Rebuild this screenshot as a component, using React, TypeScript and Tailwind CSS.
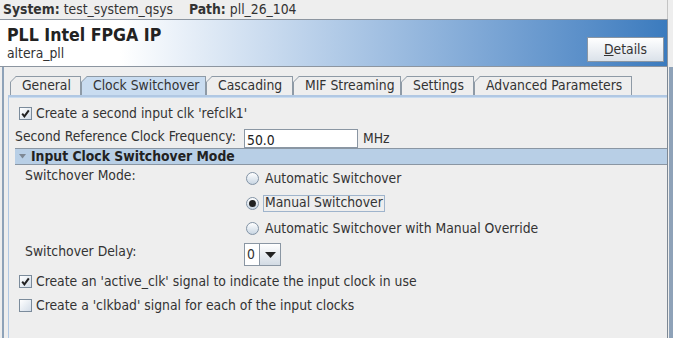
import React from "react";

const tabs = [
  { label: "General", w: "w-[71px]" },
  { label: "Clock Switchover", w: "w-[125px]", active: true },
  { label: "Cascading", w: "w-[87px]" },
  { label: "MIF Streaming", w: "w-[108px]" },
  { label: "Settings", w: "w-[73px]" },
  { label: "Advanced Parameters", w: "w-[158px]" },
];

function Check({ checked }: { checked?: boolean }) {
  return (
    <span className="w-[13px] h-[13px] shrink-0 border border-[#7b8b9b] bg-gradient-to-br from-white to-[#d3dde8] flex items-center justify-center">
      {checked && (
        <svg width="9" height="9" viewBox="0 0 9 9">
          <path d="M1.2 4.6 L3.4 7.4 L7.8 1.4" fill="none" stroke="#222" strokeWidth="2" />
        </svg>
      )}
    </span>
  );
}

function Radio({ selected }: { selected?: boolean }) {
  return (
    <span className="w-[13px] h-[13px] shrink-0 rounded-full border border-[#8293a5] bg-gradient-to-b from-white to-[#c9d6e3] flex items-center justify-center">
      {selected && <span className="w-[7px] h-[7px] rounded-full bg-[#222]" />}
    </span>
  );
}

function Tab({ label, w, active }: { label: string; w: string; active?: boolean }) {
  const bg = active ? "bg-[#c9dcf0]" : "bg-[#eeeeee]";
  return (
    <div className={`relative h-[19px] ${w} ${bg} border-t border-r border-[#8e9aa6] flex items-center pl-[12px] text-[#333]`}>
      <svg className="absolute left-0 top-[-1px]" width="7" height="19" viewBox="0 0 7 19">
        <path d="M0 0 H6 L0 6 Z" fill="#eeeeee" />
        <path d="M0.5 19 V6 L6 0.5 H7" fill="none" stroke="#8e9aa6" strokeWidth="1" />
      </svg>
      <span className="relative">{label}</span>
    </div>
  );
}

export default function App() {
  return (
    <div className="w-[673px] h-[338px] overflow-hidden bg-[#eeeeee] flex flex-col text-[13.8px] leading-none text-[#333] font-['DejaVu_Sans_Condensed',sans-serif]">
      {/* top bar */}
      <div className="h-[19px] shrink-0 flex items-center pl-[3px] border-r border-[#c4c4c4] mr-[5px]">
        <span className="font-bold">System:</span>
        <span className="ml-[4px]">test_system_qsys</span>
        <span className="font-bold ml-[16px]">Path:</span>
        <span className="ml-[4px]">pll_26_104</span>
      </div>

      {/* header */}
      <div className="h-[48px] shrink-0 border-y border-[#8c95a0] mr-[5px] border-r border-r-[#8c95a0] bg-gradient-to-r from-white from-[18%] to-[#3b7bbe] flex items-start justify-between">
        <div className="pl-[7px] pt-[7px]">
          <div className="text-[17.6px] font-bold text-[#222]">PLL Intel FPGA IP</div>
          <div className="mt-[2px] text-[13.8px] text-[#333]">altera_pll</div>
        </div>
        <button className="mt-[17px] mr-[3px] w-[77px] h-[25px] border border-[#8a96a3] bg-gradient-to-b from-white to-[#dbe2ea] text-[#333] flex items-center justify-center">
          <span className="underline">D</span>etails
        </button>
      </div>

      {/* body */}
      <div className="flex flex-1 min-h-0 pl-[2px]">
        <div className="flex-1 border-l-2 border-[#8ea2b8] flex flex-col">
          <div className="flex-1 border-r border-[#7d8894] pl-[4px] pt-[9px] flex flex-col">
            <div className="flex pl-[2px]">
              {tabs.map((t) => (
                <Tab key={t.label} {...t} />
              ))}
            </div>
            <div className="flex-1 border-l border-t-2 border-[#b1c8e3] flex flex-col">
              <div className="h-[1px] bg-[#c9dcf0]" />
              <label className="flex items-center gap-[4px] pl-[10px] mt-[9px] h-[13px]">
                <Check checked />
                <span>Create a second input clk 'refclk1'</span>
              </label>
              <div className="flex items-center pl-[6px] mt-[9px] h-[19px]">
                <span className="w-[229px] -mt-[3px]">Second Reference Clock Frequency:</span>
                <input
                  defaultValue="50.0"
                  className="w-[114px] h-[19px] border border-[#8a96a3] bg-white px-[2px] pt-[3px] text-[13.8px] text-[#222] outline-none"
                />
                <span className="ml-[5px]">MHz</span>
              </div>
              <div className="ml-[6px] h-[17px] bg-[#b8cfe6] border-y border-[#8a96a3] flex items-center">
                <svg className="ml-[4px]" width="7" height="5" viewBox="0 0 7 5">
                  <path d="M0 0 H7 L3.5 4.5 Z" fill="#7d8894" />
                </svg>
                <span className="ml-[5px] font-bold text-[#222]">Input Clock Switchover Mode</span>
              </div>

              <div className="flex pl-[16px]">
                <span className="w-[219px] pt-[4px]">Switchover Mode:</span>
                <div className="flex flex-col">
                  <div className="h-[25px] flex items-center gap-[6px] pl-[2px] pt-[2px]">
                    <Radio />
                    <span>Automatic Switchover</span>
                  </div>
                  <div className="h-[25px] flex items-center gap-[4px] pl-[2px] pt-[1px]">
                    <Radio selected />
                    <span className="border border-[#9fb4cc] px-[1px] h-[17px] flex items-center">Manual Switchover</span>
                  </div>
                  <div className="h-[25px] flex items-center gap-[6px] pl-[2px] pt-[2px]">
                    <Radio />
                    <span>Automatic Switchover with Manual Override</span>
                  </div>
                </div>
              </div>

              <div className="flex items-center pl-[16px] mt-[3px] h-[23px]">
                <span className="w-[219px] -mt-[5px]">Switchover Delay:</span>
                <div className="flex h-[23px] border border-[#8a96a3]">
                  <span className="w-[15px] bg-white flex items-center pl-[2px] border-r border-[#8a96a3]">0</span>
                  <span className="w-[20px] bg-gradient-to-b from-white to-[#d3dbe4] flex items-center justify-center">
                    <svg width="11" height="6" viewBox="0 0 11 6">
                      <path d="M0 0 H11 L5.5 6 Z" fill="#222" />
                    </svg>
                  </span>
                </div>
              </div>

              <label className="flex items-center gap-[4px] pl-[10px] mt-[9px] h-[13px]">
                <Check checked />
                <span>Create an 'active_clk' signal to indicate the input clock in use</span>
              </label>
              <label className="flex items-center gap-[4px] pl-[10px] mt-[11px] h-[13px]">
                <Check />
                <span>Create a 'clkbad' signal for each of the input clocks</span>
              </label>
            </div>
          </div>
        </div>
        <div className="w-[1px]" />
        <div className="w-[4px] bg-[#8ea2b8]" />
      </div>
    </div>
  );
}
